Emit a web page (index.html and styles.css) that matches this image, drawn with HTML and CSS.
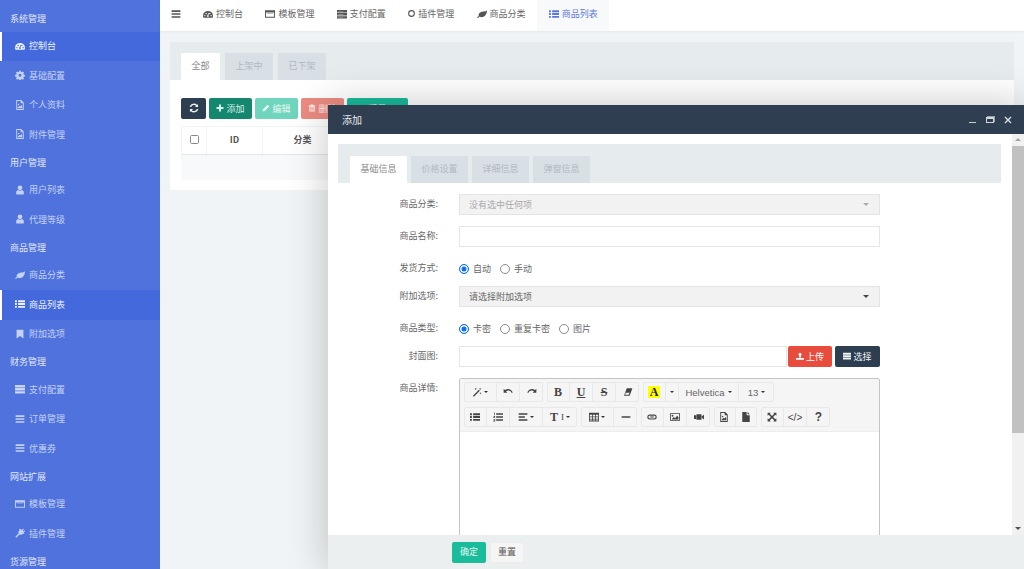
FILE: index.html
```html
<!DOCTYPE html>
<html lang="zh-CN">
<head>
<meta charset="utf-8">
<title>商品列表</title>
<link rel="stylesheet" href="styles.css">
</head>
<body>
<svg class="defs" aria-hidden="true">
  <symbol id="i-dash" viewBox="0 0 16 16"><path fill-rule="evenodd" d="M0 11a8 8 0 0 1 16 0c0 1-.3 2-.8 3H.8C.3 13 0 12 0 11zm3-1.500a1.100 1.100 0 1 0 0 2.200 1.100 1.100 0 0 0 0-2.200zm2-3.500a1.100 1.100 0 1 0 0 2.200 1.100 1.100 0 0 0 0-2.200zm6 0a1.100 1.100 0 1 0 0 2.200 1.100 1.100 0 0 0 0-2.200zm2 3.500a1.100 1.100 0 1 0 0 2.200 1.100 1.100 0 0 0 0-2.200zM8.500 6.500l-1.300 3.600a1.400 1.400 0 1 0 1.500.200l.8-3.700z"/></symbol>
  <symbol id="i-cog" viewBox="0 0 16 16"><path fill-rule="evenodd" d="M6.700 1h2.600l.3 2 1.400.6 1.700-1.200 1.800 1.900-1.200 1.600.6 1.500 2 .3v2.600l-2 .3-.6 1.500 1.200 1.600-1.800 1.800-1.700-1.200-1.400.6-.3 2H6.700l-.3-2-1.400-.6-1.700 1.200-1.800-1.800 1.200-1.600-.6-1.500-2-.3V7.700l2-.3.6-1.500-1.200-1.600 1.800-1.900L5 3.600l1.400-.6zM8 5.800a2.400 2.400 0 1 0 0 4.800 2.400 2.400 0 0 0 0-4.800z"/></symbol>
  <symbol id="i-file" viewBox="0 0 16 16"><path fill-rule="evenodd" d="M2 0h8l4 4v12H2zm1.500 1.500v13h9V5H9V1.500zM5 11.500l2-2.500 1.500 1.500L10.500 8l1 1.500v3.500H4.500v-1.500zM5.800 6a1.200 1.200 0 1 0 0 2.400 1.200 1.200 0 0 0 0-2.400z"/></symbol>
  <symbol id="i-doc" viewBox="0 0 16 16"><path d="M2 0h7v5h5v11H2zM10.500 0l3.500 3.500h-3.500z"/></symbol>
  <symbol id="i-user" viewBox="0 0 16 16"><circle cx="8" cy="4.500" r="3.800"/><path d="M2 15v-3.500C2 9.500 3.500 8 5 8c.8.700 1.800 1 3 1s2.200-.3 3-1c1.500 0 3 1.500 3 3.500V15z"/></symbol>
  <symbol id="i-leaf" viewBox="0 0 16 16"><path d="M16 2c-.2 6-3 11-8.500 11-1.500 0-2.700-.4-3.500-1-.8.600-1.500 1.400-2.300 2.500L0 14c.8-1.200 1.700-2.100 2.600-3C2.200 6 7 4 11 4c1.800 0 3.500-.6 5-2z"/></symbol>
  <symbol id="i-list" viewBox="0 0 16 16"><path d="M0 2h3v3H0zm5 0h11v3H5zM0 6.500h3v3H0zm5 0h11v3H5zM0 11h3v3H0zm5 0h11v3H5z"/></symbol>
  <symbol id="i-book" viewBox="0 0 16 16"><path d="M2.500 1h11v14L8 11l-5.500 4z"/></symbol>
  <symbol id="i-server" viewBox="0 0 16 16"><path d="M0 1.500h16v4H0zm0 5h16v4H0zm0 5h16v3.500H0z"/><path fill="#fff" opacity=".45" d="M2 3h8v1H2zm0 5h8v1H2zm0 5h8v1H2z"/></symbol>
  <symbol id="i-bars" viewBox="0 0 16 16"><path d="M1 2h14v2.600H1zm0 4.700h14v2.600H1zm0 4.700h14V14H1z"/></symbol>
  <symbol id="i-win" viewBox="0 0 16 16"><path fill-rule="evenodd" d="M0 2h16v12H0zm1.500 3.500v7h13v-7z"/><path d="M3 7h10v1H3z" opacity=".6"/></symbol>
  <symbol id="i-plug" viewBox="0 0 16 16"><path d="M9.500 2l1.300 1.300L13 1l1.500 1.500-2.300 2.200 1 1 2.300-2.200L16 5l-2.300 2.200L15 8.500l-1 1-1-.9c-1.500 1.700-3.700 2.600-5.800 1.800L2 15.500 .5 14l5.100-5.100C5 6.800 5.800 4.600 7.500 3.200l-.9-1L7.500 1.200z"/></symbol>
  <symbol id="i-ring" viewBox="0 0 16 16"><circle cx="8" cy="8" r="6.500" fill="none" stroke="currentColor" stroke-width="2.500"/></symbol>
  <symbol id="i-sync" viewBox="0 0 16 16"><path d="M14.500 1.500v5h-5l1.900-1.900A4.800 4.800 0 0 0 3.500 6.500L1 6a7.300 7.300 0 0 1 12-3zM1.500 14.500v-5h5L4.600 11.400a4.800 4.800 0 0 0 7.900-1.900L15 10a7.300 7.300 0 0 1-12 3z"/></symbol>
  <symbol id="i-plus" viewBox="0 0 16 16"><path d="M6 1h4v5h5v4h-5v5H6v-5H1V6h5z"/></symbol>
  <symbol id="i-pen" viewBox="0 0 16 16"><path d="M11 1.500l3.500 3.500-9 9L1 15l1-4.500z"/></symbol>
  <symbol id="i-trash" viewBox="0 0 16 16"><path fill-rule="evenodd" d="M5.500 1h5l1 2H15v1.500h-1.500V15h-11V4.500H1V3h3.500zM5 6v7h1.300V6zm2.400 0v7h1.300V6zm2.300 0v7H11V6z"/></symbol>
  <symbol id="i-upload" viewBox="0 0 16 16"><path d="M8 1l4.500 4.500H10V11H6V5.500H3.500zM0 12h16v3.500H0z"/></symbol>
  <symbol id="i-magic" viewBox="0 0 16 16"><path d="M11 4.500l1.500 1.500L3 15.500 1.500 14zM6 1l.5 1.500L8 3l-1.500.5L6 5l-.5-1.500L4 3l1.500-.5zm7.500 7l.5 1.500 1.500.5-1.500.5-.5 1.500-.5-1.500-1.500-.5 1.500-.5zM13 1l.5 1.500L15 3l-1.500.5L13 5l-.5-1.500L11 3l1.500-.5z"/></symbol>
  <symbol id="i-undo" viewBox="0 0 16 16"><path d="M1 3v6h6L4.800 6.800C7.800 4.800 12 5.500 14 9.500l1.500-.8C13.500 3 7.500 1.500 3.300 4.900z"/></symbol>
  <symbol id="i-redo" viewBox="0 0 16 16"><path d="M15 3v6H9l2.200-2.200C8.200 4.800 4 5.500 2 9.500L.5 8.700C2.500 3 8.500 1.500 12.700 4.900z"/></symbol>
  <symbol id="i-eraser" viewBox="0 0 16 16"><path d="M6 2h9l-4.500 12h-9z"/><path fill="#f5f5f5" d="M4.500 9h6l-1.400 3.500H3.200z"/></symbol>
  <symbol id="i-ol" viewBox="0 0 16 16"><path d="M5 2h11v2.500H5zm0 4.700h11v2.500H5zm0 4.800h11V14H5zM1 1h2v4H2V2H1zM.5 6.500H3.500v.8L2 8.900h1.500v.8H.5v-.8L2 7.300H.5zM.5 11h3v4h-3v-.8h2v-.8h-2v-.7h2v-.9h-2z"/></symbol>
  <symbol id="i-align" viewBox="0 0 16 16"><path d="M1 2h14v2.200H1zm0 4.800h10V9H1zm0 4.800h14v2.200H1z"/></symbol>
  <symbol id="i-table" viewBox="0 0 16 16"><path fill-rule="evenodd" d="M0 1h16v14H0zm1.300 3.500v2.500h3.700V4.500zm5 0v2.500h3.400V4.500zm4.700 0v2.500h3.700V4.500zm-9.700 3.800v2.400h3.700V8.300zm5 0v2.400h3.400V8.300zm4.700 0v2.400h3.700V8.300zM1.300 12v1.700h3.700V12zm5 0v1.700h3.400V12zm4.700 0v1.700h3.700V12z"/></symbol>
  <symbol id="i-hr" viewBox="0 0 16 16"><path d="M1 6.800h14v2.400H1z"/></symbol>
  <symbol id="i-link" viewBox="0 0 16 16"><path fill-rule="evenodd" d="M4.500 4h7a4 4 0 0 1 0 8h-7a4 4 0 0 1 0-8zm0 1.800a2.200 2.200 0 0 0 0 4.400h7a2.200 2.200 0 0 0 0-4.400zM5 7.100h6v1.800H5z"/></symbol>
  <symbol id="i-pic" viewBox="0 0 16 16"><path fill-rule="evenodd" d="M0 2h16v12H0zm1.300 1.300v9.400h13.400V3.300zM3 11l3-3 2 2 3.500-4 2 2.500V12H3zM4 4.500a1.500 1.500 0 1 0 0 3 1.500 1.500 0 0 0 0-3z"/></symbol>
  <symbol id="i-video" viewBox="0 0 16 16"><path d="M4 3.500h8v9H4zM12.500 7L16 4v8l-3.500-3zM0 5h3.500v6H0z"/></symbol>
  <symbol id="i-full" viewBox="0 0 16 16"><path d="M1 1h5L4.500 2.800 8 6.200l3.500-3.400L10 1h5v5l-1.800-1.600L9.800 8l3.400 3.600L15 10v5h-5l1.500-1.800L8 9.800l-3.500 3.400L6 15H1v-5l1.800 1.600L6.200 8 2.800 4.400 1 6z"/></symbol>
</svg>

<div class="app">
  <aside class="side">
    <div class="side-head">系统管理</div>
    <a class="side-item on"><svg class="ic"><use href="#i-dash"/></svg>控制台</a>
    <a class="side-item"><svg class="ic"><use href="#i-cog"/></svg>基础配置</a>
    <a class="side-item"><svg class="ic"><use href="#i-file"/></svg>个人资料</a>
    <a class="side-item"><svg class="ic"><use href="#i-file"/></svg>附件管理</a>
    <div class="side-head">用户管理</div>
    <a class="side-item"><svg class="ic"><use href="#i-user"/></svg>用户列表</a>
    <a class="side-item"><svg class="ic"><use href="#i-user"/></svg>代理等级</a>
    <div class="side-head">商品管理</div>
    <a class="side-item"><svg class="ic"><use href="#i-leaf"/></svg>商品分类</a>
    <a class="side-item on"><svg class="ic"><use href="#i-list"/></svg>商品列表</a>
    <a class="side-item"><svg class="ic"><use href="#i-book"/></svg>附加选项</a>
    <div class="side-head">财务管理</div>
    <a class="side-item"><svg class="ic"><use href="#i-server"/></svg>支付配置</a>
    <a class="side-item"><svg class="ic"><use href="#i-bars"/></svg>订单管理</a>
    <a class="side-item"><svg class="ic"><use href="#i-bars"/></svg>优惠券</a>
    <div class="side-head">网站扩展</div>
    <a class="side-item"><svg class="ic"><use href="#i-win"/></svg>模板管理</a>
    <a class="side-item"><svg class="ic"><use href="#i-plug"/></svg>插件管理</a>
    <div class="side-head">货源管理</div>
  </aside>

  <main class="main">
    <nav class="top">
      <svg class="ic burger"><use href="#i-bars"/></svg>
      <a class="top-tab"><svg class="ic"><use href="#i-dash"/></svg>控制台</a>
      <a class="top-tab"><svg class="ic"><use href="#i-win"/></svg>模板管理</a>
      <a class="top-tab"><svg class="ic"><use href="#i-server"/></svg>支付配置</a>
      <a class="top-tab"><svg class="ic small"><use href="#i-ring"/></svg>插件管理</a>
      <a class="top-tab"><svg class="ic"><use href="#i-leaf"/></svg>商品分类</a>
      <a class="top-tab on"><svg class="ic"><use href="#i-list"/></svg>商品列表</a>
    </nav>

    <section class="card">
      <div class="tabs main-tabs">
        <span class="tab on wa">全部</span>
        <span class="tab wb">上架中</span>
        <span class="tab wb">已下架</span>
      </div>
      <div class="card-body">
        <div class="tools">
          <button class="btn dark sq"><svg class="ic"><use href="#i-sync"/></svg></button>
          <button class="btn teal"><svg class="ic"><use href="#i-plus"/></svg>添加</button>
          <button class="btn mint"><svg class="ic"><use href="#i-pen"/></svg>编辑</button>
          <button class="btn rose"><svg class="ic"><use href="#i-trash"/></svg>删除</button>
          <button class="btn green lg">一键导入</button>
        </div>
        <div class="thead">
          <div class="th c1"><span class="check"></span></div>
          <div class="th c2">ID</div>
          <div class="th c3">分类</div>
        </div>
        <div class="tempty"></div>
      </div>
    </section>
  </main>
</div>

<div class="modal">
  <header class="m-head">
    <span class="m-title">添加</span>
    <span class="m-ctrl">
      <i class="w-min"></i>
      <i class="w-max"></i>
      <svg class="w-close" viewBox="0 0 8 8"><path d="M1 1l6 6M7 1L1 7"/></svg>
    </span>
  </header>
  <div class="m-body">
    <div class="m-content">
      <div class="tabs m-tabs">
        <span class="tab on wc">基础信息</span>
        <span class="tab wc">价格设置</span>
        <span class="tab wc">详细信息</span>
        <span class="tab wc">弹窗信息</span>
      </div>
      <div class="row">
        <label class="lbl">商品分类:</label>
        <div class="select muted"><span>没有选中任何项</span><i class="caret soft"></i></div>
      </div>
      <div class="row">
        <label class="lbl">商品名称:</label>
        <div class="input"></div>
      </div>
      <div class="row tight">
        <label class="lbl">发货方式:</label>
        <div class="radios">
          <span class="radio"><i class="dot on"></i>自动</span>
          <span class="radio"><i class="dot"></i>手动</span>
        </div>
      </div>
      <div class="row">
        <label class="lbl">附加选项:</label>
        <div class="select"><span>请选择附加选项</span><i class="caret"></i></div>
      </div>
      <div class="row tight">
        <label class="lbl">商品类型:</label>
        <div class="radios">
          <span class="radio"><i class="dot on"></i>卡密</span>
          <span class="radio"><i class="dot"></i>重复卡密</span>
          <span class="radio"><i class="dot"></i>图片</span>
        </div>
      </div>
      <div class="row">
        <label class="lbl">封面图:</label>
        <div class="cover">
          <div class="input grow"></div>
          <button class="btn red up"><svg class="ic"><use href="#i-upload"/></svg>上传</button>
          <button class="btn dark pick"><svg class="ic"><use href="#i-server"/></svg>选择</button>
        </div>
      </div>
      <div class="row last">
        <label class="lbl">商品详情:</label>
        <div class="editor">
          <div class="tb">
            <div class="tb-row first">
              <div class="grp"><b class="nb w33"><svg class="ic"><use href="#i-magic"/></svg><i class="mini"></i></b><b class="nb"><svg class="ic"><use href="#i-undo"/></svg></b><b class="nb"><svg class="ic"><use href="#i-redo"/></svg></b></div>
              <div class="grp"><b class="nb serif">B</b><b class="nb serif ul">U</b><b class="nb serif st">S</b><b class="nb"><svg class="ic"><use href="#i-eraser"/></svg></b></div>
              <div class="grp"><b class="nb"><span class="hl">A</span></b><b class="nb w13"><i class="mini"></i></b><b class="nb w60 txt">Helvetica<i class="mini"></i></b><b class="nb w35 txt">13<i class="mini"></i></b></div>
            </div>
            <div class="tb-row">
              <div class="grp"><b class="nb"><svg class="ic"><use href="#i-list"/></svg></b><b class="nb"><svg class="ic"><use href="#i-ol"/></svg></b><b class="nb w33"><svg class="ic"><use href="#i-align"/></svg><i class="mini"></i></b><b class="nb w34 serif">T<span class="tsz">I</span><i class="mini"></i></b></div>
              <div class="grp"><b class="nb w33"><svg class="ic"><use href="#i-table"/></svg><i class="mini"></i></b><b class="nb"><svg class="ic"><use href="#i-hr"/></svg></b></div>
              <div class="grp"><b class="nb"><svg class="ic"><use href="#i-link"/></svg></b><b class="nb"><svg class="ic"><use href="#i-pic"/></svg></b><b class="nb"><svg class="ic"><use href="#i-video"/></svg></b></div>
              <div class="grp"><b class="nb w22"><svg class="ic"><use href="#i-file"/></svg></b><b class="nb w22"><svg class="ic"><use href="#i-doc"/></svg></b></div>
              <div class="grp"><b class="nb"><svg class="ic"><use href="#i-full"/></svg></b><b class="nb code">&lt;/&gt;</b><b class="nb help">?</b></div>
            </div>
          </div>
        </div>
      </div>
    </div>
    <div class="sbar">
      <i class="arrow up-a"></i>
      <i class="thumb"></i>
      <i class="arrow down-a"></i>
    </div>
  </div>
  <footer class="m-foot">
    <button class="btn green ok">确定</button>
    <button class="btn plain ok">重置</button>
  </footer>
</div>
</body>
</html>
```

FILE: styles.css
```css
* { box-sizing: border-box; }
html, body { margin: 0; height: 100%; overflow: hidden; }
body {
  font-family: "Noto Sans CJK SC", "Noto Sans", sans-serif;
  font-size: 9px;
  color: #666;
  background: #f1f4f6;
}
.defs { display: none; }
.ic { width: 10px; height: 10px; fill: currentColor; flex: none; }
i { font-style: normal; display: block; }
b { font-weight: 400; }

.app { display: flex; height: 569px; }

/* sidebar */
.side {
  width: 160px; flex: none; height: 100%; overflow: hidden;
  padding-top: 5.5px;
  background: #4f72dd;
  color: #c6d2f5;
}
.side-head {
  height: 26px; padding: 0 0 1px 10px;
  display: flex; align-items: center;
  color: #e2e8fa;
}
.side-item {
  height: 29.5px; padding: 0 0 1px 15px;
  display: flex; align-items: center; gap: 4px;
  border-left: 0 solid #fff;
}
.side-item.on {
  background: #4369dc; color: #eef2fd;
  border-left-width: 2px; padding-left: 13px;
}

/* main */
.main { flex: 1; min-width: 0; }
.top {
  height: 31px; background: #fff;
  display: flex; align-items: flex-start; padding-left: 11px;
  box-shadow: 0 1px 2px rgba(0,0,0,.05);
  color: #666;
}
.burger { margin: 8.500px 10.800px 0 0; color: #555; }
.top-tab {
  height: 31px; padding: 0 11.200px 4px;
  display: flex; align-items: center; gap: 3px;
}
.top-tab .ic { color: #555; }
.top-tab .small { width: 7px; height: 7px; }
.top-tab.on { background: #f8f9fa; color: #5b78e0; padding: 0 11.500px 4px 12px; }
.top-tab.on .ic { color: #5b78e0; }

.card {
  margin: 11px 10px 0; height: 148px;
  background: #fff; border-radius: 2px;
}
.tabs { display: flex; gap: 4px; background: #e6ebee; align-items: flex-end; }
.tab {
  height: 27px; padding-bottom: 2px; background: #d8dfe5; color: #b2b9c0;
  display: flex; align-items: center; justify-content: center;
}
.tab.on { background: #fff; color: #888; }
.main-tabs { height: 38px; padding-left: 11px; gap: 5px; }
.wa { width: 39px; }
.wb { width: 48px; }
.wc { width: 57px; }

.card-body { padding: 18px 11px 0; }
.tools { display: flex; gap: 3px; height: 21px; }
.btn {
  height: 21px; border: 0; border-radius: 2px; padding: 0 0 1px;
  font: inherit; color: #fff;
  display: inline-flex; align-items: center; justify-content: center; gap: 2px;
}
.btn .ic { width: 8px; height: 8px; }
.dark { background: #2c3e50; color: #eef1f4; }
.sq { width: 25px; }
.btn.sq .ic { width: 10px; height: 10px; }
.teal { width: 43px; background: #16876f; color: #d5efe8; }
.mint { width: 43px; background: #70d5bd; color: #e8f8f4; }
.rose { width: 43px; background: #ec8b81; color: #fde9e6; }
.green { background: #1abc9c; color: #e3f8f3; }
.lg { width: 61px; }
.thead {
  margin-top: 7px; height: 29px; display: flex;
  border: 1px solid #f2f3f4; border-bottom: 1px solid #e4e6e8;
}
.th {
  display: flex; align-items: center; justify-content: center;
  padding-bottom: 2px;
  border-right: 1px solid #f2f3f4;
  color: #555; font-weight: 700;
}
.c1 { width: 25px; }
.c2 { width: 56px; }
.c3 { width: 80px; }
.check {
  width: 9px; height: 9px; border: 1px solid #8a8a8a; border-radius: 1.500px;
  background: #fff;
}
.tempty { height: 25px; background: #f8f9fa; }

/* modal */
.modal {
  position: absolute; left: 328px; top: 105px; width: 696px; height: 464px;
  display: flex; flex-direction: column;
  background: #fff;
  box-shadow: 1px 1px 40px rgba(0,0,0,.24);
}
.m-head {
  height: 29px; flex: none; background: #2f3f51; color: #e6e9ec;
  display: flex; align-items: center; justify-content: space-between;
  padding: 0 12px 0 14px;
}
.m-title { font-size: 10px; }
.m-ctrl { display: flex; align-items: center; gap: 10px; }
.w-min { width: 7px; height: 1px; background: #c8ced4; margin-top: 5px; }
.w-max { width: 8px; height: 6px; margin-top: 1px; border: 1px solid #d4d8dc; border-top-width: 2px; box-shadow: 1px -1px 0 #98a2ac; }
.w-close { width: 8px; height: 8px; fill: none; stroke: #e0e4e8; stroke-width: 1.300; }
.m-body { flex: 1; min-height: 0; display: flex; overflow: hidden; }
.m-content { flex: 1; min-width: 0; padding: 10px 11px 0 10px; overflow: hidden; }
.m-tabs { height: 39px; padding-left: 12px; margin-bottom: 11px; }

.row {
  display: grid; grid-template-columns: 100px 421px; column-gap: 21px;
  align-items: center; min-height: 21px; margin-bottom: 11px;
}
.row.tight { margin-bottom: 7px; }
.row.last { align-items: start; margin-bottom: 0; }
.lbl { text-align: right; color: #666; line-height: 19px; padding-bottom: 2px; }
.row.last .lbl { line-height: 20px; }
.input { height: 21px; border: 1px solid #e6e6e6; background: #fff; }
.select {
  height: 21px; border: 1px solid #e4e4e4; background: #f2f2f2;
  display: flex; align-items: center; justify-content: space-between;
  padding: 0 10px 1px 9px; color: #666;
}
.select.muted { color: #a8a8a8; }
.caret {
  width: 0; height: 0;
  border: 3px solid transparent; border-top-color: #444; border-bottom-width: 0;
}
.caret.soft { border-top-color: #aaa; }
.radios { display: flex; gap: 9px; align-items: center; }
.radio { display: flex; align-items: center; gap: 4px; line-height: 11px; }
.dot {
  width: 10px; height: 10px; border-radius: 50%;
  border: 1px solid #8a8a8a; background: #fff;
}
.dot.on { border-color: #0d6efd; box-shadow: inset 0 0 0 1.500px #fff; background: #0d6efd; }
.cover { display: flex; }
.grow { flex: 1; }
.up { width: 44px; margin-left: 1px; background: #e74c3c; }
.pick { width: 45px; margin-left: 3px; }
.red { color: #fff; }

/* editor */
.editor {
  height: 300px; border: 1px solid #c4c4c4; border-radius: 2px 2px 0 0; background: #fff;
}
.tb { height: 53px; background: #f5f5f5; border-bottom: 1px solid #ededed; padding: 3px 0 0 4px; }
.tb-row { display: flex; gap: 4px; height: 20px; margin-bottom: 4px; color: #333; }
.tb-row.first { margin-bottom: 5px; }
.grp { display: flex; outline: 1px solid #e8e8e8; outline-offset: -1px; border-radius: 2px; }
.nb {
  width: 23px; height: 20px; flex: none;
  display: flex; align-items: center; justify-content: center; gap: 2px;
  border-right: 1px solid #e8e8e8; color: #444;
}
.nb:last-child { border-right: 0; }
.nb .ic { width: 10px; height: 10px; }
.w13 { width: 13px; }
.w22 { width: 21.500px; }
.w33 { width: 33px; }
.w34 { width: 34px; }
.w35 { width: 35px; }
.w60 { width: 60px; }
.mini {
  width: 0; height: 0; border: 2px solid transparent;
  border-top-color: #333; border-bottom-width: 0;
}
.txt { color: #666; gap: 3px; font-family: "Liberation Sans", sans-serif; font-size: 9.500px; }
.serif { font-family: "Liberation Serif", serif; font-weight: 700; font-size: 12px; color: #444; }
.ul { text-decoration: underline; }
.st { text-decoration: line-through; }
.hl {
  background: #ff0; padding: 0 2px; font-family: "Liberation Serif", serif;
  font-weight: 700; font-size: 12px; line-height: 12px; color: #222;
}
.tsz { font-size: 9px; font-weight: 400; margin-left: 1px; }
.code { font-family: "Liberation Sans", sans-serif; font-size: 10px; }
.help { font-family: "Liberation Sans", sans-serif; font-size: 12px; font-weight: 700; }

/* scrollbar */
.sbar {
  width: 12px; flex: none; background: #f1f1f1;
  display: flex; flex-direction: column;
}
.arrow { height: 12px; flex: none; position: relative; }
.arrow::after {
  content: ""; position: absolute; left: 3px; top: 4px;
  border: 3px solid transparent;
}
.up-a::after { border-bottom-color: #a3a3a3; border-top-width: 0; }
.down-a::after { border-top-color: #505050; border-bottom-width: 0; }
.thumb { height: 287px; flex: none; background: #c1c1c1; }
.down-a { margin-top: auto; }

.m-foot {
  height: 34px; flex: none; background: #ebeff0;
  display: flex; align-items: center; gap: 4px; padding-left: 124px;
}
.ok { width: 34px; }
.plain { background: #f5f5f5; border: 1px solid #ececec; color: #555; }
```
